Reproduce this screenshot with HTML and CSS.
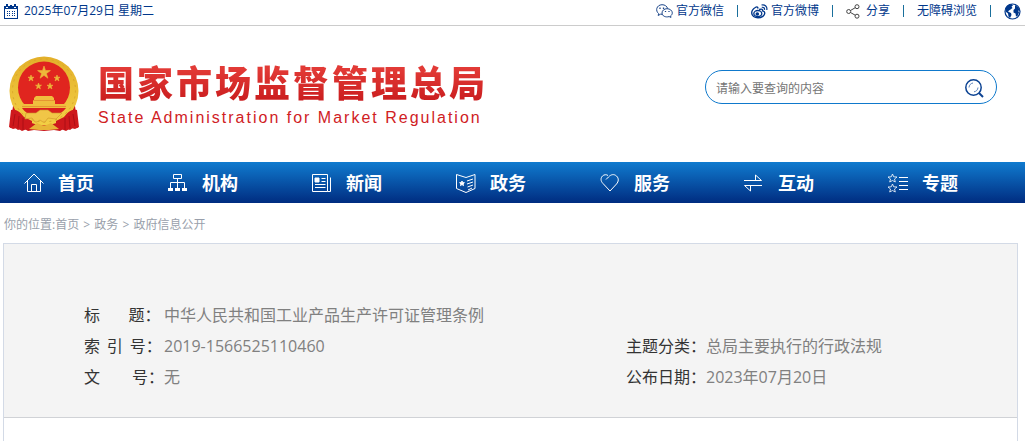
FILE: index.html
```
<!DOCTYPE html>
<html lang="zh-CN">
<head>
  <meta charset="UTF-8">
  <meta name="viewport" content="width=device-width, initial-scale=1.0">
  <title>国家市场监督管理总局</title>
  <link rel="stylesheet" href="styles.css">
</head>
<body>

  <div class="topbar">
    <div class="date">
      <svg width="14" height="15" viewBox="0 0 14 15" fill="#00378b">
        <path d="M0 2h2v2h2V2h6v2h2V2h2v13H0zM1 5v9h12V5z" fill-rule="evenodd"/>
        <path d="M2 0h2v3H2zM6 1h2v2H6zM10 0h2v3h-2z"/>
        <path d="M3 7h1v1H3zM5 7h1v1H5zM8 7h1v1H8zM10 7h1v1h-1zM3 9h1v1H3zM5 9h1v1H5zM8 9h1v1H8zM10 9h1v1h-1zM3 11h1v1H3zM5 11h1v1H5zM8 11h1v1H8zM10 11h1v1h-1z"/>
      </svg>
      <span>2025年07月29日 星期二</span>
    </div>
    <div class="tools">
      <a href="#">
        <svg width="17" height="14" viewBox="0 0 17 14" fill="none" stroke="#1c4689">
          <path d="M6 10.300 4.500 10.200 2.200 11.500 2.600 9.500C-.8 7 .3 1 6 .7c3 0 5 1.600 5.600 3.800"/>
          <path d="M11 4.700c3 0 5.300 2 5.300 4.200 0 1.300-.7 2.300-1.700 3l.4 1.500-1.900-.8C9.600 13.600 6 12 6 9c0-2.400 2.200-4.300 5-4.300z"/>
          <path d="M4 3.500v1.500M7.500 3.500v1.500M9.500 7v1M13 7v1" stroke-width="1.300"/>
        </svg>
        <span>官方微信</span>
      </a>
      <i></i>
      <a href="#">
        <svg width="17" height="15" viewBox="0 0 17 15" fill="none" stroke="#00378b">
          <path d="M6.500 4.500C7.500 3 6 2.400 4.300 3.500 2.300 4.700.7 6.800.7 9c0 2.800 3 4.800 6.200 4.800 4 0 6.900-2.400 6.900-4.700 0-1.500-1.300-2-2.200-2.200.4-1.500-.6-2.400-3.500-1.400" stroke-width="1.400"/>
          <ellipse cx="6.800" cy="9.600" rx="4" ry="3.100" stroke-width="1.300"/>
          <circle cx="6.300" cy="10" r="1.800" fill="#00378b" stroke="none"/>
          <path d="M10.500 1c3.500-.8 6 1.700 5.300 5M10.800 3.300c1.800-.3 3 .8 2.700 2.500" stroke-width="1.200"/>
        </svg>
        <span>官方微博</span>
      </a>
      <i></i>
      <a href="#" class="share">
        <svg width="14" height="15" viewBox="0 0 14 15" fill="none" stroke="#444">
          <circle cx="2.700" cy="7.500" r="2"/>
          <circle cx="11" cy="2.700" r="2"/>
          <circle cx="11" cy="12.200" r="2"/>
          <path d="M4.500 6.500 9.200 3.700M4.500 8.500 9.200 11.200"/>
        </svg>
        <span>分享</span>
      </a>
      <i></i>
      <a href="#"><span>无障碍浏览</span></a>
      <i></i>
      <a href="#" aria-label="English">
        <svg width="17" height="17" viewBox="0 0 17 17">
          <circle cx="8.500" cy="8.500" r="7.500" fill="#fff" stroke="#00378b" stroke-width="1.200"/>
          <path d="M1.500 5 4 2l3.500-1L9 2.500 7.500 3.500l1 1.500L6.500 6.500 5 7.500l-1 1 3 1.500.5 2L6 15l-1.500-1.500L4 10.500 1.500 8.500zM11 2l3 2 1.800 3v1L14 7.500l1 2-1.500 3.500-1.500.5-.5-3-2-1V7l1.500-1.500z" fill="#00378b"/>
        </svg>
      </a>
    </div>
  </div>

  <header class="header">
    <a href="#" class="logo">
      <svg width="70" height="76" viewBox="0 0 70 76">
        <defs>
          <linearGradient id="gold" x1="0" y1="0" x2="0" y2="1">
            <stop offset="0" stop-color="#e3b02a"/>
            <stop offset="1" stop-color="#f3cf45"/>
          </linearGradient>
        </defs>
        <path d="M4 50 1 72l4-1 4 3 5-2 5 3 6-1 10 1 10-1 6 1 5-3 5 2 4-3 4 1-3-22z" fill="#c9171b"/>
        <circle cx="35" cy="35" r="34.500" fill="url(#gold)"/>
        <circle cx="35" cy="34.500" r="31.500" fill="none" stroke="#dba62a" stroke-dasharray="2 4"/>
        <circle cx="35" cy="31.500" r="26" fill="#e0251f"/>
        <path d="m35 10 1.500 4.600h4.900l-4 2.900 1.500 4.700-3.900-2.900-3.900 2.900 1.500-4.700-4-2.900h4.900zM22 19l.8 2.200H25l-1.800 1.400.7 2.300-1.900-1.400-1.900 1.400.7-2.300-1.800-1.400h2.200zM48 19l.8 2.200H51l-1.800 1.400.7 2.300-1.900-1.400-1.900 1.400.7-2.300-1.800-1.400h2.200zM29.500 27l.8 2.200h2.200l-1.800 1.400.7 2.300-1.900-1.400-1.900 1.400.7-2.300-1.800-1.400h2.200zM41 27l.8 2.200H44l-1.800 1.400.7 2.300-1.900-1.400-1.900 1.400.7-2.300-1.800-1.400h2.200z" fill="#edb83a" stroke="#edb83a" stroke-width=".6"/>
        <path d="M27 40h16l2 2v2H25v-2zM24 44h22v4h11v4H13v-4h11z" fill="#f0be3e"/>
        <path d="M13 50.500h44M24 44.500h22" stroke="#dd7a2a" stroke-width=".6"/>
        <path d="M13 52h44c-3 4-7 6-10 7H23c-4-1-7-3-10-7z" fill="#d91f1d"/>
        <path d="M2 54c6-1 9 2 13 7l8 4v9l-5-1-5 2-5-3-4 1-4-2zM68 54c-6-1-9 2-13 7l-8 4v9l5-1 5 2 5-3 4 1 4-2z" fill="#ce181c"/>
        <path d="M6 58 4 70M10 60l-1 12M14 62v12M64 58l2 12M60 60l1 12M56 62v12" stroke="#a30d14" stroke-width=".8"/>
        <path d="M17 57h10l4-3h8l4 3h10l-6 6-8-1-3 4h-2l-3-2-3 2h-2l-3-4-7 1z" fill="#f1c647" stroke="#cf922a" stroke-width=".6"/>
        <path d="M20 73l8-6 7 3 7-3 8 6-10 1H30z" fill="#e8b537"/>
      </svg>
      <span class="names">
        <strong>国家市场监督管理总局</strong>
        <em>State Administration for Market Regulation</em>
      </span>
    </a>
    <form class="search">
      <input type="text" placeholder="请输入要查询的内容" aria-label="搜索">
      <button type="button" aria-label="查询">
        <svg width="19" height="19" viewBox="0 0 19 19" fill="none" stroke="#0b4292">
          <circle cx="8.500" cy="8.500" r="7.700" stroke-width="1.500"/>
          <path d="m14 14 4 4" stroke-width="2"/>
          <path d="M4 8.500C4.200 6 5.800 4.300 8 4M13 8.500c-.2 2.500-1.800 4-4 4.300" stroke="#5c83bb"/>
        </svg>
      </button>
    </form>
  </header>

  <nav class="nav">
    <a href="#">
      <svg width="20" height="20" viewBox="0 0 20 20"><path d="M.5 10.500 10 1l9.500 9.500M3.500 8v10.500h13V8M7.500 18.500v-7h5v7"/></svg>
      <span>首页</span>
    </a>
    <a href="#">
      <svg width="20" height="20" viewBox="0 0 20 20"><path d="M5.500 1.500h8v4h-8zM9.500 5.500v4M2.500 15V9.500h14V15M9.500 9.500V15"/><path d="M0 16.500h5M7 16.500h5M14 16.500h5" stroke-width="3"/></svg>
      <span>机构</span>
    </a>
    <a href="#">
      <svg width="20" height="20" viewBox="0 0 20 20"><path d="M.5 1.500h15v17H.5zM15.500 18.500h3v-14M9.500 5.500h4M9.500 8.500h4M3 11.500h10.500M3 14.500h10.500"/><path d="M3 5h4v4H3z" fill="#fff"/></svg>
      <span>新闻</span>
    </a>
    <a href="#">
      <svg width="20" height="20" viewBox="0 0 20 20"><path d="M.5 1.500 10 4.500l9-3v14l-9 4-9.500-4zM11 8l6-2M11 11l6-2M11.500 14l5.500-2M12 17l4-2"/><path d="m6 8 .6 1.700h1.800L7 10.800l.5 1.800L6 11.500l-1.500 1.100.5-1.800-1.400-1.100h1.800z" fill="#fff"/></svg>
      <span>政务</span>
    </a>
    <a href="#">
      <svg width="20" height="20" viewBox="0 0 20 20"><path d="M6 6.500 8.500 4C11 1.300 14 .8 16.500 3c2.500 2.300 2.200 5.500 0 8L10 18 3 10.500C.5 8 .5 5 2.500 3 4 1.500 6.500 1.300 8 2.500"/></svg>
      <span>服务</span>
    </a>
    <a href="#">
      <svg width="20" height="20" viewBox="0 0 20 20"><path d="M0 7.500h17.500L11.500 2v5M18 12.500H.5L6.500 18v-5"/></svg>
      <span>互动</span>
    </a>
    <a href="#">
      <svg width="20" height="20" viewBox="0 0 20 20"><path d="M11 4.500h9M11 8.500h9M11 12.500h9M11 16.500h9"/><path d="m4.500 1 1.200 2.800 3.300.2L6.500 6l.8 3-2.800-1.500L1.700 9l.8-3L0 4l3.300-.2zM4.500 11l1.200 2.800 3.300.2-2.500 2 .8 3-2.800-1.500L1.700 19l.8-3L0 14l3.300-.2z" stroke-width=".8"/></svg>
      <span>专题</span>
    </a>
  </nav>

  <div class="crumbs">你的位置:<a href="#">首页</a> <b>&gt;</b> <a href="#">政务</a> <b>&gt;</b> <a href="#">政府信息公开</a></div>

  <main class="article">
    <dl class="info">
      <div class="wide"><dt>标&emsp;&nbsp;&nbsp;&nbsp;题：</dt><dd>中华人民共和国工业产品生产许可证管理条例</dd></div>
      <div><dt>索&nbsp;&thinsp;引&nbsp;&thinsp;号：</dt><dd>2019-1566525110460</dd></div>
      <div><dt>主题分类：</dt><dd>总局主要执行的行政法规</dd></div>
      <div><dt>文&emsp;&emsp;号：</dt><dd>无</dd></div>
      <div><dt>公布日期：</dt><dd>2023年07月20日</dd></div>
    </dl>
  </main>

</body>
</html>
```
FILE: styles.css
```
* {
  box-sizing: border-box;
}
body {
  margin: 0;
  min-height: 100vh;
  display: flex;
  flex-direction: column;
  font-family: "Open Sans", "Noto Sans CJK SC", sans-serif;
  font-size: 12px;
  background-color: #fff;
}
a {
  color: inherit;
  text-decoration: none;
}
svg {
  display: block;
  flex: none;
}

/* top bar */
.topbar {
  display: flex;
  justify-content: space-between;
  align-items: center;
  height: 26px;
  padding: 0 4px 3px;
  border-bottom: 1px solid #ccc;
  color: #00378b;
  line-height: 20px;
}
.date {
  display: flex;
  align-items: center;
  gap: 6px;
}
.tools {
  display: flex;
  align-items: center;
  gap: 13px;
}
.tools a {
  display: flex;
  align-items: center;
  gap: 3px;
}
.tools .share {
  gap: 6px;
}
.tools i {
  width: 1px;
  height: 12px;
  background-color: #1a6f9c;
}

/* header */
.header {
  display: flex;
  justify-content: space-between;
  align-items: flex-start;
  height: 136px;
  padding: 30px 28px 0 9px;
}
.logo {
  display: flex;
  gap: 19px;
  color: #d0211f;
}
.names {
  display: flex;
  flex-direction: column;
  padding-top: 3px;
}
.names strong {
  font-size: 36px;
  line-height: 50px;
  font-weight: 900;
  letter-spacing: 3px;
  background: linear-gradient(#e23a36 20%, #c81a1c 90%);
  -webkit-background-clip: text;
  background-clip: text;
  color: transparent;
}
.names em {
  font-family: "Liberation Sans", sans-serif;
  font-style: normal;
  font-size: 16px;
  line-height: 18px;
  letter-spacing: 2px;
}
.search {
  display: flex;
  align-items: center;
  width: 292px;
  height: 34px;
  margin-top: 14px;
  padding: 2px 12px 0 10px;
  border: 1px solid #0f79cc;
  border-radius: 17px;
}
.search input {
  flex: 1;
  min-width: 0;
  padding: 0;
  border: 0;
  outline: 0;
  font: inherit;
  background: none;
}
.search input::placeholder {
  color: #757575;
}
.search button {
  padding: 0;
  border: 0;
  background: none;
  cursor: pointer;
}

/* main menu */
.nav {
  display: grid;
  grid-template-columns: repeat(7, 1fr);
  height: 41px;
  padding-right: 17px;
  background: linear-gradient(#107bcf, #002c80);
}
.nav a {
  display: flex;
  align-items: center;
  gap: 14px;
  padding-left: 24px;
  color: #fff;
  font-size: 18px;
  font-weight: 700;
  line-height: 24px;
}
.nav svg {
  fill: none;
  stroke: #fff;
}

.crumbs {
  padding: 12px 4px 8px;
  line-height: 20px;
  color: #999fab;
}
.crumbs b {
  margin: 0 1px;
  font-weight: 400;
}

/* document info */
.article {
  flex: 1;
  margin: 0 7px 0 3px;
  border: 1px solid #d3dae6;
  border-bottom: 0;
}
.info {
  display: grid;
  grid-template-columns: 542px 1fr;
  margin: 0;
  padding: 56px 0 24px 80px;
  border-bottom: 1px solid #d0d2d6;
  background-color: #f4f4f4;
  font-size: 16px;
  line-height: 31px;
}
.info div {
  display: flex;
}
.info .wide {
  grid-column: 1 / -1;
}
.info dt {
  width: 80px;
  color: #333;
  white-space: nowrap;
}
.info dd {
  margin: 0;
  color: #808080;
}
```
